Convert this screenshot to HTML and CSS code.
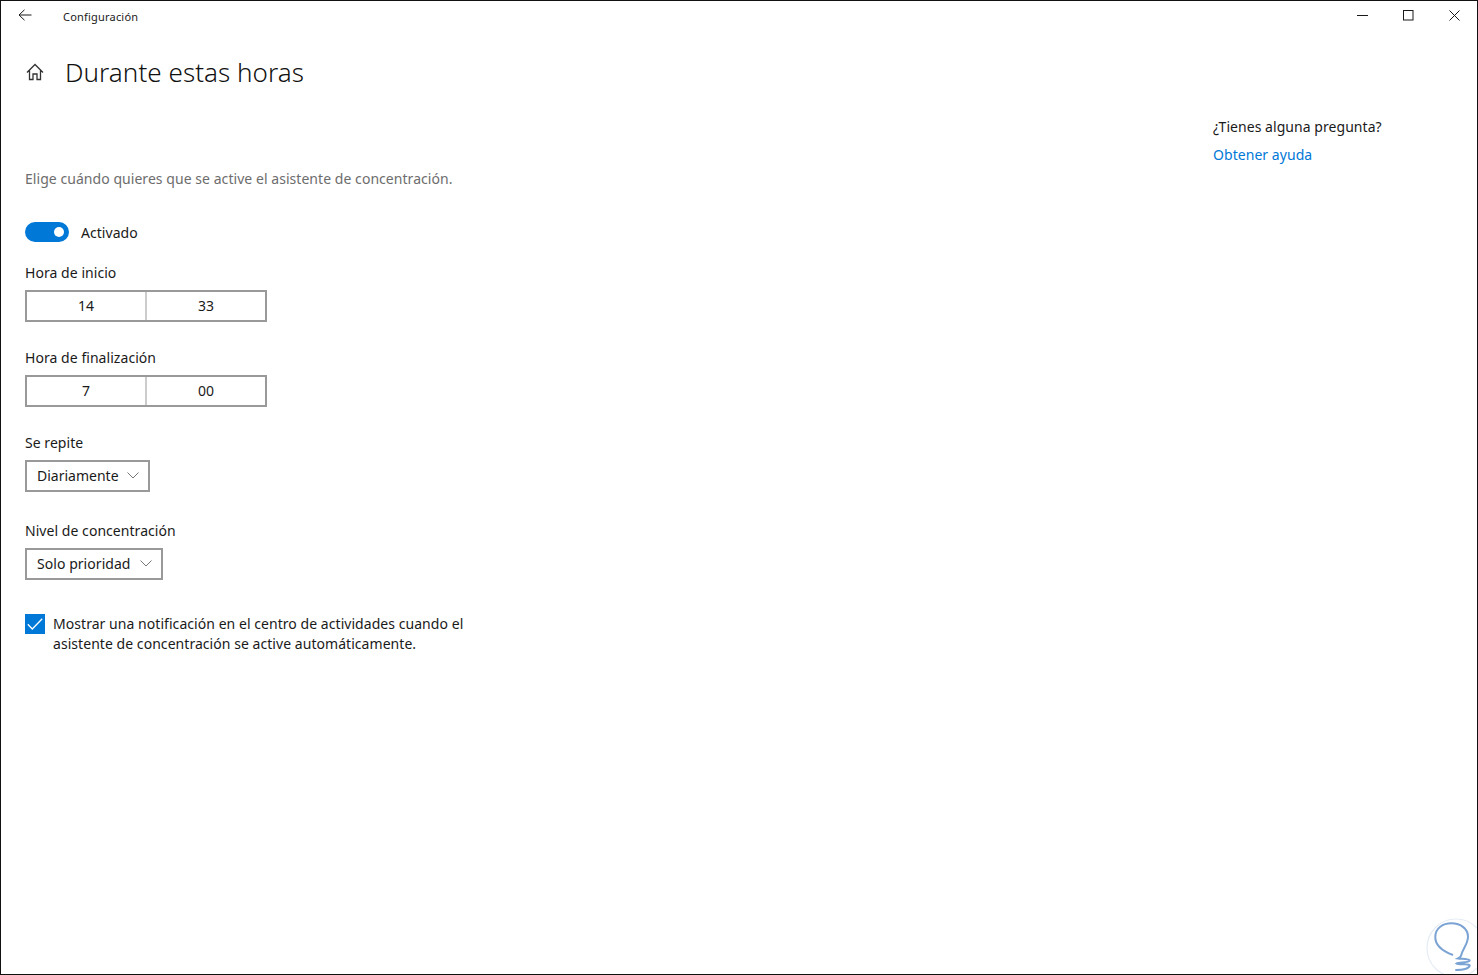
FILE: index.html
```html
<!DOCTYPE html>
<html lang="es">
  <head>
    <meta charset="UTF-8" />
    <title>Configuración</title>
    <link rel="stylesheet" href="styles.css">
  </head>
  <body>
    <div class="window">
      <div class="titlebar">
        <svg class="back-icon" width="14" height="12" viewBox="0 0 14 12">
          <path d="M6.5 .8 1 6l5.500 5.200M1 6h12.500" fill="none" stroke="#1a1a1a" stroke-width="1" />
        </svg>
        <span class="app-name">Configuración</span>
        <div class="window-controls">
          <svg width="11" height="11" viewBox="0 0 11 11"><path d="M0 5.500h11" stroke="#1a1a1a" fill="none" /></svg>
          <svg width="11" height="11" viewBox="0 0 11 11"><rect x=".5" y=".5" width="9.500" height="9.500" stroke="#1a1a1a" fill="none" /></svg>
          <svg width="11" height="11" viewBox="0 0 11 11"><path d="M.5.500l10 10M10.500.500l-10 10" stroke="#1a1a1a" fill="none" /></svg>
        </div>
      </div>

      <div class="page-header">
        <svg class="home-icon" width="20" height="20" viewBox="0 0 20 20">
          <path d="M2 10.500 10 2.500l8 8M4.500 8.500v9h3.500v-5.500h4v5.500h3.500v-9" fill="none" stroke="#333" stroke-width="1.300" />
        </svg>
        <h1>Durante estas horas</h1>
      </div>

      <div class="content">
        <div class="settings">
          <p class="description">Elige cuándo quieres que se active el asistente de concentración.</p>

          <div class="toggle-row">
            <div class="toggle"><div class="toggle-knob"></div></div>
            <span>Activado</span>
          </div>

          <div class="field">
            <label>Hora de inicio</label>
            <div class="time-picker">
              <div class="time-cell">14</div>
              <div class="time-cell">33</div>
            </div>
          </div>

          <div class="field">
            <label>Hora de finalización</label>
            <div class="time-picker">
              <div class="time-cell">7</div>
              <div class="time-cell">00</div>
            </div>
          </div>

          <div class="field">
            <label>Se repite</label>
            <div class="select select-repeat">
              <span>Diariamente</span>
              <svg width="12" height="7" viewBox="0 0 12 7"><path d="M.5.500 6 6l5.500-5.500" fill="none" stroke="#777" /></svg>
            </div>
          </div>

          <div class="field field-level">
            <label>Nivel de concentración</label>
            <div class="select select-level">
              <span>Solo prioridad</span>
              <svg width="12" height="7" viewBox="0 0 12 7"><path d="M.5.500 6 6l5.500-5.500" fill="none" stroke="#777" /></svg>
            </div>
          </div>

          <div class="check-row">
            <div class="checkbox">
              <svg width="16" height="12" viewBox="0 0 16 12"><path d="M.8 6.300 5.300 11 15.200 .8" fill="none" stroke="#fff" stroke-width="1.300" /></svg>
            </div>
            <span>Mostrar una notificación en el centro de actividades cuando el asistente de concentración se active automáticamente.</span>
          </div>
        </div>

        <div class="help">
          <div>¿Tienes alguna pregunta?</div>
          <a href="#">Obtener ayuda</a>
        </div>
      </div>

      <svg class="watermark" width="60" height="66" viewBox="0 0 60 66">
        <circle cx="39" cy="40" r="29" fill="none" stroke="#e6ecf5" stroke-width="1.200" />
        <path d="M36 47C28 44 18 38 18.300 28.700 18.500 20 26 15.300 34.300 15.300 44 15.300 51 21 51 28.700 51 36 45 42 44.300 47 44 49 42 50 41 50.500 45 51 53 51 52.700 52.500 52 55 42 54 39.500 55.500 42 57.500 52 55 52.700 57.500 52 61 44 62 38.300 62" fill="none" stroke="#7ba3d4" stroke-width="2" />
      </svg>
    </div>
  </body>
</html>
```

FILE: styles.css
```css
* {
  box-sizing: border-box;
}
body {
  margin: 0;
  font-family: "Noto Sans", sans-serif;
  font-size: 14px;
  letter-spacing: 0.05px;
  color: #1a1a1a;
  background-color: white;
}
.window {
  position: relative;
  height: 975px;
  border: 1px solid #111;
  overflow: hidden;
}
.titlebar {
  display: flex;
  align-items: center;
  height: 31px;
  padding-left: 17px;
}
.back-icon {
  margin-top: -3px;
}
.app-name {
  margin-left: 31px;
  font-size: 11px;
  letter-spacing: 0.2px;
}
.window-controls {
  display: flex;
  gap: 35px;
  margin-left: auto;
  margin-right: 17px;
  margin-top: -3px;
}
.page-header {
  display: flex;
  align-items: center;
  height: 44px;
  margin-top: 18px;
  padding-left: 24px;
}
.home-icon {
  margin-right: 20px;
}
h1 {
  margin: 0;
  font-size: 26px;
  font-weight: 300;
  font-family: "Noto Sans", sans-serif;
  color: #111;
}
.content {
  display: flex;
  justify-content: space-between;
  padding-left: 24px;
}
.settings {
  width: 450px;
  padding-top: 75px;
}
.description {
  margin: 0;
  color: #6d6d6d;
  line-height: 20px;
}
.toggle-row {
  display: flex;
  align-items: center;
  gap: 12px;
  margin-top: 33px;
  height: 20px;
}
.toggle {
  display: flex;
  align-items: center;
  justify-content: flex-end;
  width: 44px;
  height: 20px;
  padding-right: 5px;
  background-color: #0078d7;
  border-radius: 10px;
}
.toggle-knob {
  width: 10px;
  height: 10px;
  background-color: white;
  border-radius: 50%;
}
.field {
  margin-top: 21px;
}
.field + .field {
  margin-top: 26px;
}
.field + .field-level {
  margin-top: 29px;
}
label {
  display: block;
  line-height: 20px;
  margin-bottom: 7px;
}
.time-picker {
  display: flex;
  width: 242px;
  height: 32px;
  border: 2px solid #999;
}
.time-cell {
  flex: 1;
  text-align: center;
  line-height: 28px;
}
.time-cell + .time-cell {
  border-left: 2px solid #ccc;
}
.select {
  display: flex;
  align-items: center;
  justify-content: space-between;
  height: 32px;
  padding: 0 9px 2px 10px;
  border: 2px solid #999;
}
.select-repeat {
  width: 125px;
  letter-spacing: 0;
}
.select-level {
  width: 138px;
}
.check-row {
  display: flex;
  gap: 8px;
  margin-top: 34px;
  line-height: 20px;
}
.checkbox {
  flex: none;
  display: flex;
  align-items: center;
  justify-content: center;
  width: 20px;
  height: 20px;
  background-color: #0078d7;
}
.help {
  width: 264px;
  padding-top: 23px;
  line-height: 20px;
}
.help a {
  display: block;
  margin-top: 8px;
  color: #0078d7;
  text-decoration: none;
}
.watermark {
  position: absolute;
  right: 0;
  bottom: 0;
}
```
